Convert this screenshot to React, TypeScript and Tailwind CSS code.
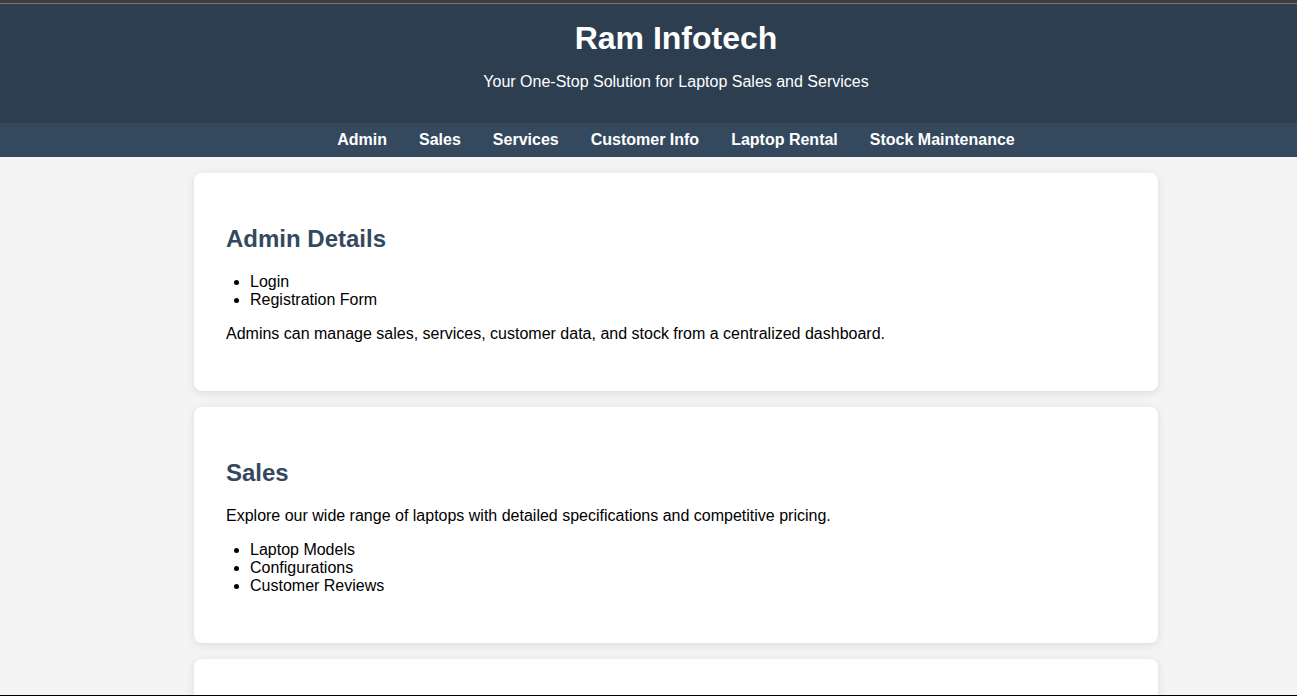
export default function App() {
    const links = ["Admin", "Sales", "Services", "Customer Info", "Laptop Rental", "Stock Maintenance"]

    return (
        <div className="min-h-screen w-full overflow-hidden bg-[#f4f4f4] font-['Liberation_Sans',Arial,sans-serif] text-black">
            <div className="h-[3px] bg-[#3d3d3d]"></div>
            <div className="h-px bg-[#777777]"></div>

            <div className="w-[1352px]">
                <header className="bg-[#2c3e50] text-white text-center h-[119px] pt-4">
                    <h1 className="text-[32px] font-bold leading-[36.8px]">Ram Infotech</h1>
                    <p className="mt-4 text-base leading-[18px]">Your One-Stop Solution for Laptop Sales and Services</p>
                </header>

                <nav className="bg-[#34495e] h-[34px] flex items-center justify-center gap-8">
                    {links.map((l) => (
                        <a key={l} href="#" className="text-white font-bold text-base leading-[18px]">{l}</a>
                    ))}
                </nav>

                <main className="w-[964px] mx-auto pt-4 flex flex-col gap-4">
                    <section className="bg-white rounded-lg shadow-[0_2px_10px_rgba(0,0,0,0.1)] p-8">
                        <h2 className="text-2xl font-bold leading-7 my-5 text-[#34495e]">Admin Details</h2>
                        <ul className="list-disc pl-6 my-4 leading-[18px]">
                            <li>Login</li>
                            <li>Registration Form</li>
                        </ul>
                        <p className="my-4 leading-[18px]">Admins can manage sales, services, customer data, and stock from a centralized dashboard.</p>
                    </section>

                    <section className="bg-white rounded-lg shadow-[0_2px_10px_rgba(0,0,0,0.1)] p-8">
                        <h2 className="text-2xl font-bold leading-7 my-5 text-[#34495e]">Sales</h2>
                        <p className="my-4 leading-[18px]">Explore our wide range of laptops with detailed specifications and competitive pricing.</p>
                        <ul className="list-disc pl-6 my-4 leading-[18px]">
                            <li>Laptop Models</li>
                            <li>Configurations</li>
                            <li>Customer Reviews</li>
                        </ul>
                    </section>

                    <section className="bg-white rounded-lg shadow-[0_2px_10px_rgba(0,0,0,0.1)] h-[218px] mb-4"></section>
                </main>
            </div>

            <div className="fixed bottom-0 left-0 right-0 h-px bg-black"></div>
        </div>
    )
}
